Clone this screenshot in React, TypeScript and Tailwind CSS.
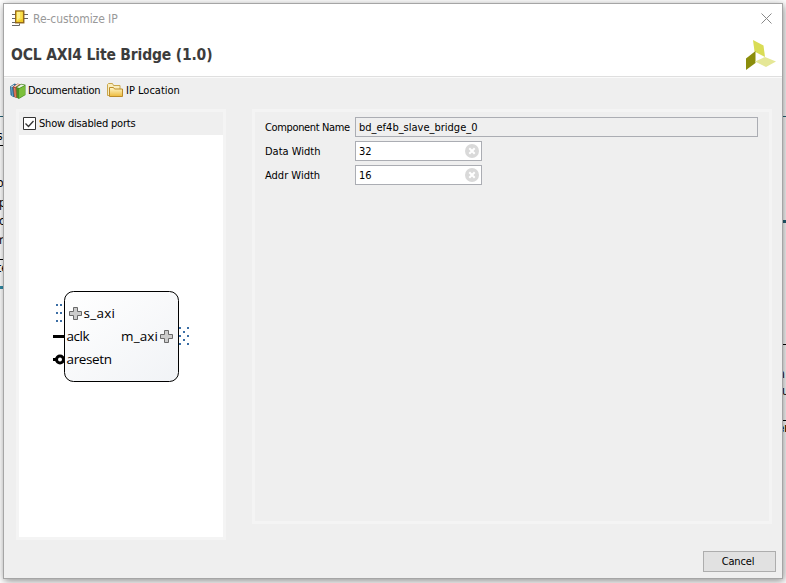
import type { ReactNode } from "react";

const FONT = "font-['DejaVu_Sans_Condensed','DejaVu_Sans',sans-serif] [font-stretch:condensed]";

function ChipIcon() {
  return (
    <svg width="18" height="18" viewBox="0 0 18 18" className="shrink-0">
      <path d="M0 4.500h4M0 8.500h4M0 12.500h4M12 4.500h4M12 8.500h4M0 15.500h7.500v-2" fill="none" stroke="#666" />
      <rect x="3.750" y="1" width="8" height="11.750" fill="#f0cb25" stroke="#916619" strokeWidth="1.400" />
      <path d="M4.500 1.700h6v7l-6 3z" fill="#f9df4f" />
      <path d="M5 2h3v6l-3 2z" fill="#fff08a" />
    </svg>
  );
}

function BooksIcon() {
  return (
    <svg width="16" height="16" viewBox="0.500 0 15.500 16" preserveAspectRatio="none" className="shrink-0">
      <path d="M.5 3.500L5 .5l2 1v13l-3.500-.5-2.500-2z" fill="#2f6f96" />
      <path d="M1 4l3-2 .8.500L2 4.500z" fill="#e8eef2" />
      <path d="M2 5l1 8" stroke="#6ca9cb" />
      <path d="M3.500 3.500L8 .5l2.500 1v12l-4 1.500-2-1.500z" fill="#bc4b31" />
      <path d="M4.300 3.500L8 1l1.500.6L5.500 4z" fill="#f1eee5" />
      <path d="M5 5l.7 9" stroke="#e39375" />
      <path d="M6.500 4L11.500.7l4 1V12L9 16l-2-1.500z" fill="#4b8d24" />
      <path d="M7.300 4.200l4.200-2.700 3 .7-5 2.800z" fill="#edf5e5" />
      <path d="M9.300 6l5.700-3.300v9L9.300 15z" fill="#7bbf3a" />
    </svg>
  );
}

function FolderIcon() {
  return (
    <svg width="16" height="15" viewBox="0 0 16 15" className="shrink-0">
      <defs>
        <linearGradient id="folder" x2="0" y2="1">
          <stop stopColor="#fff8ce" />
          <stop offset="1" stopColor="#edba3a" />
        </linearGradient>
      </defs>
      <path d="M.5 12.500v-11L1.500.5h4l1 2h6.500v10z" fill="#f9edbd" stroke="#c9a64d" />
      <path d="M2.500 13.500v-9h4l1 1.500h8v7.500z" fill="url(#folder)" stroke="#bc8c29" />
    </svg>
  );
}

function BrandMark() {
  return (
    <svg width="31" height="31" viewBox="0 0 31 31">
      <path d="M8 0l10.500 5.500L20 17 9.500 11.500z" fill="#d9dc55" />
      <path d="M1 18.500l9.500-7.500v12L1 30z" fill="#8b8d0b" />
      <path d="M10 21.500L20 17l11 4.500L21 27z" fill="#e5e796" />
    </svg>
  );
}

function ClearIcon() {
  return (
    <svg width="14" height="14" viewBox="0 0 14 14">
      <circle cx="7" cy="7" r="7" fill="#d9d9d9" />
      <path d="M4.300 4.300l5.400 5.400M9.700 4.300l-5.400 5.400" stroke="#fff" strokeWidth="2" />
    </svg>
  );
}

function Plus({ x, y }: { x: number; y: number }) {
  return (
    <path
      transform={`translate(${x} ${y})`}
      d="M4.500.5h4v4h4v4h-4v4h-4v-4h-4v-4h4z"
      fill="#ccc"
      stroke="#696969"
    />
  );
}

function Dots({ points }: { points: number[][] }) {
  return (
    <>
      {points.map(([x, y]) => (
        <rect key={`${x}-${y}`} x={x} y={y} width="2" height="2" fill="#3b6ea5" />
      ))}
    </>
  );
}

function BlockDiagram() {
  return (
    <svg width="160" height="115" viewBox="40 280 160 115" className="font-['Open_Sans','Noto_Sans',sans-serif] text-[13.5px] [font-stretch:normal]">
      <defs>
        <linearGradient id="block" x2="1" y2="1">
          <stop stopColor="#fff" />
          <stop offset="1" stopColor="#f1f3f6" />
        </linearGradient>
      </defs>
      <rect x="64.500" y="291.500" width="114" height="90" rx="9" fill="url(#block)" stroke="#000" />
      <Dots points={[[56, 304], [60, 304], [56, 312], [60, 312], [56, 320], [60, 320]]} />
      <Dots points={[[179, 327], [187, 327], [183, 331], [179, 335], [187, 335], [183, 339], [179, 343], [187, 343]]} />
      <path d="M53 336.500h11" stroke="#000" strokeWidth="3" />
      <path d="M53 359.500h4" stroke="#000" strokeWidth="3" />
      <circle cx="60" cy="359.500" r="3.500" fill="#fff" stroke="#000" strokeWidth="3" />
      <Plus x={69} y={307} />
      <Plus x={160} y={330} />
      <text x="83.500" y="318" textLength="31.500">s_axi</text>
      <text x="66.500" y="341" textLength="23">aclk</text>
      <text x="121" y="341" textLength="37">m_axi</text>
      <text x="66.500" y="364" textLength="45.500">aresetn</text>
    </svg>
  );
}

function Row({ label, children }: { label: ReactNode; children: ReactNode }) {
  return (
    <div className="flex h-5 items-center">
      <div className="w-[90px] shrink-0 pt-px whitespace-nowrap">{label}</div>
      {children}
    </div>
  );
}

function NumberField({ value }: { value: string }) {
  return (
    <div className="flex h-5 w-[127px] items-center justify-between border border-[#abadb3] bg-white pr-[2px] pl-[3px]">
      <span className="pt-px">{value}</span>
      <ClearIcon />
    </div>
  );
}

function Backdrop() {
  return (
    <div className="absolute inset-0 overflow-hidden bg-white text-[12px] text-black">
      <div className="absolute top-[116px] left-0 h-px w-full bg-[#246276]" />
      <div className="absolute top-[145px] left-0 h-px w-1 bg-black" />
      <div className="absolute top-[259px] left-0 h-px w-1 bg-black" />
      <div className="absolute top-[286px] left-0 h-[3px] w-1 bg-[#318ba6]" />
      <span className="absolute top-[129px] -left-[3px]">se</span>
      <span className="absolute top-[176px] -left-[3px]">o</span>
      <span className="absolute top-[196px] -left-[1px]">p</span>
      <span className="absolute top-[214px] -left-[1px]">c</span>
      <span className="absolute top-[233px] -left-[1px] [text-rendering:geometricPrecision]">ri</span>
      <span className="absolute top-[261px] -left-[3px]">te</span>
      <div className="absolute top-[220px] right-0 h-[3px] w-1 bg-[#246276]" />
      <div className="absolute top-[344px] right-0 h-px w-1 bg-black" />
      <div className="absolute top-[420px] right-0 h-px w-1 bg-black" />
      <span className="absolute top-[367px] left-[778px]">n</span>
      <span className="absolute top-[384px] left-[782px]">u</span>
      <span className="absolute top-[421px] left-[777px] font-bold">er</span>
    </div>
  );
}

export default function App() {
  return (
    <div className={`relative h-[583px] w-[786px] overflow-hidden pt-[3px] pl-[3px] text-[11px] leading-[14px] text-black ${FONT}`}>
      <Backdrop />
      <main className="relative flex h-[576px] w-[780px] flex-col border border-[#a5a5a5] bg-[#efefef] shadow-[1px_2px_8px_rgba(0,0,0,0.45)]">
        <header className="flex h-[73px] shrink-0 flex-col border-b border-b-[#dfdfdf] bg-white">
          <div className="flex h-[30px] items-center justify-between pr-[10px] pl-2">
            <div className="flex items-center gap-[3px] text-[12px] text-[#999]">
              <ChipIcon />
              <span className="tracking-[-0.07px]">Re-customize IP</span>
            </div>
            <svg width="11" height="11" viewBox="0 0 11 11" className="mb-[2px]">
              <path d="M.5.5l10 10M10.500.5l-10 10" stroke="#888" />
            </svg>
          </div>
          <div className="flex flex-1 items-center justify-between pr-[6px] pl-[7px]">
            <h1 className="pb-px text-[15.5px] leading-5 font-bold tracking-[-0.17px] text-[#3c3c3c]">OCL AXI4 Lite Bridge (1.0)</h1>
            <BrandMark />
          </div>
        </header>
        <nav className="flex h-[32px] shrink-0 items-center border-t border-t-[#fafafa] pb-[6px] pl-[6px]">
          <BooksIcon />
          <span className="ml-[2px] w-[79px] tracking-[-0.32px]">Documentation</span>
          <FolderIcon />
          <span className="ml-[3px]">IP Location</span>
        </nav>
        <div className="flex h-[431px] shrink-0 items-start gap-[26px] pl-3">
          <section className="flex h-[431px] w-[210px] flex-col border-[3px] border-[#f4f4f4] bg-white">
            <label className="flex h-[23px] shrink-0 items-center gap-[3px] bg-[#efefef] pl-1">
              <svg width="13" height="13" viewBox="0 0 13 13">
                <path d="M.5.5h12v12H.5z" fill="#fff" stroke="#333" />
                <path d="M2.500 6.500l3 3 5-5.500" fill="none" stroke="#333" strokeWidth="1.300" />
              </svg>
              <span className="tracking-[-0.19px]">Show disabled ports</span>
            </label>
            <div className="flex flex-1 items-center pt-[3px] pl-[21px]">
              <BlockDiagram />
            </div>
          </section>
          <section className="flex h-[415px] w-[520px] flex-col gap-1 border-[3px] border-[#f4f4f4] pt-[5px] pl-[10px]">
            <Row label={<span className="tracking-[-0.36px]">Component Name</span>}>
              <div className="flex h-5 w-[403px] items-center border border-[#abadb3] pt-px pl-[3px]">bd_ef4b_slave_bridge_0</div>
            </Row>
            <Row label="Data Width"><NumberField value="32" /></Row>
            <Row label="Addr Width"><NumberField value="16" /></Row>
          </section>
        </div>
        <footer className="flex flex-1 items-end justify-end pr-[6px] pb-[6px]">
          <button className="h-[21px] w-[73px] border border-[#adadad] bg-[#e1e1e1] pr-[3px] tracking-[-0.15px]">Cancel</button>
        </footer>
      </main>
    </div>
  );
}
